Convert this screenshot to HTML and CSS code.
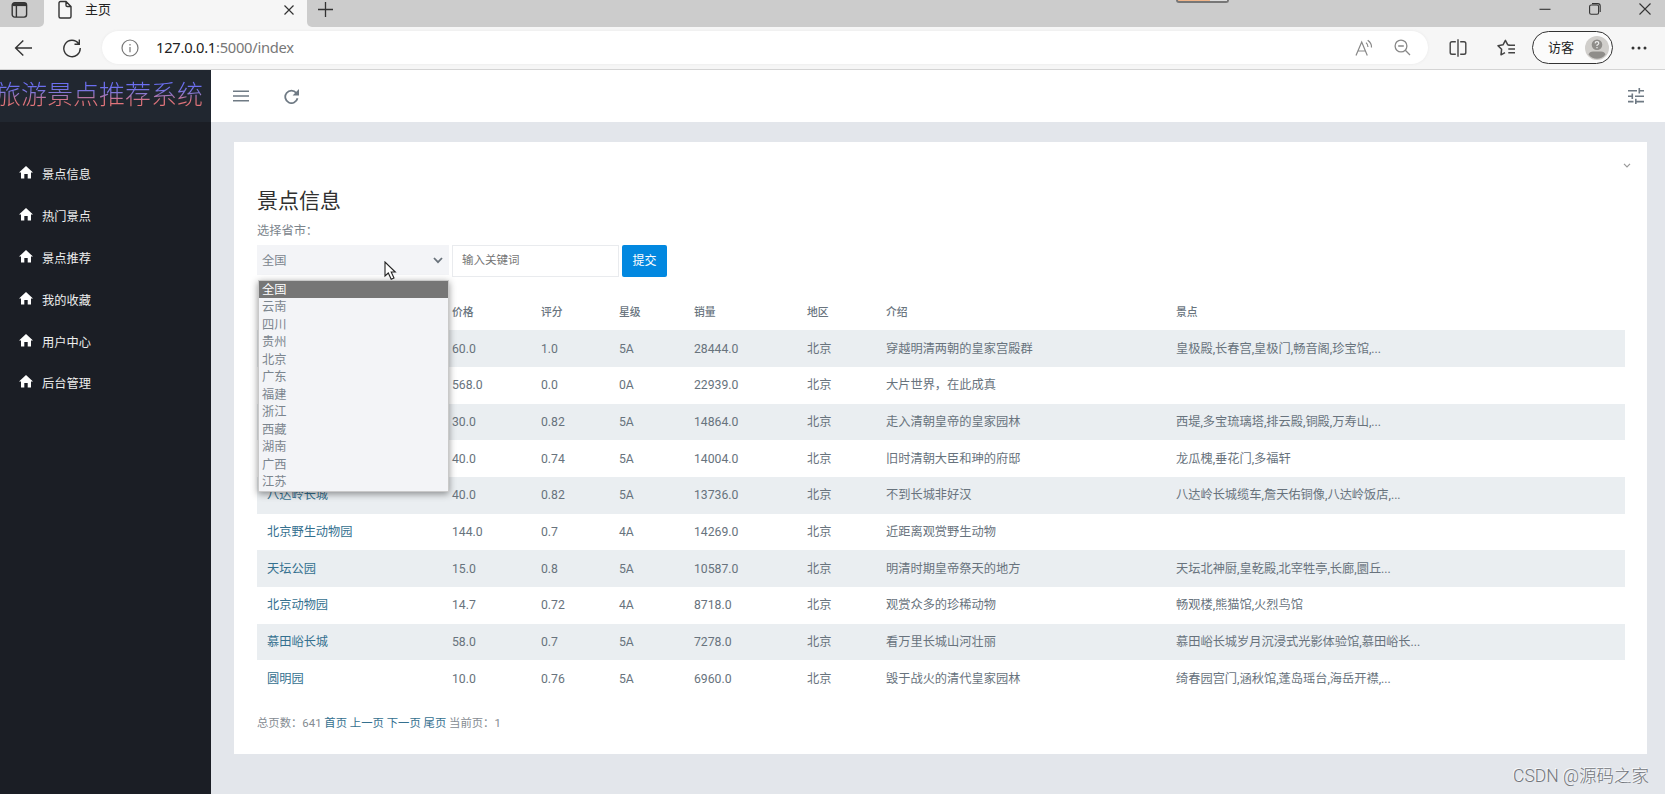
FILE: index.html
```html
<!DOCTYPE html>
<html lang="zh-CN">
<head>
<meta charset="utf-8">
<title>主页</title>
<link rel="stylesheet" href="styles.css">
</head>
<body>
<svg class="sprite" aria-hidden="true">
  <symbol id="home" viewBox="0 0 14 13"><path d="M7 0 14 6.6H12V12.5H8.7V8H5.3V12.5H2V6.6H0Z" fill="#fff"/></symbol>
</svg>
<div class="browser">
  <div class="tabstrip">
    <div class="tabstrip-left"><svg width="18" height="18" viewBox="0 0 18 18" fill="none" stroke="#333" stroke-width="1.4"><rect x="1.2" y="1.7" width="14.4" height="14.4" rx="2.5"/><path d="M1.5 4h14M5.4 5v11" /><path d="M2 3.6h13" stroke-width="3"/></svg></div>
    <div class="tab">
      <svg class="tab-file" width="16" height="20" viewBox="0 0 16 20" fill="none" stroke="#333" stroke-width="1.4"><path d="M3.5 1.5H9L14 6.5V16.5Q14 18 12.5 18H3.5Q2 18 2 16.5V3Q2 1.5 3.5 1.5ZM9 1.7V5.2Q9 6.5 10.3 6.5H13.8"/></svg>
      <span class="tab-title">主页</span>
      <svg class="tab-close" width="12" height="12" viewBox="0 0 12 12" stroke="#333" stroke-width="1.2"><path d="M1.5 1.5 10.5 10.5M10.5 1.5 1.5 10.5"/></svg>
    </div>
    <div class="tabstrip-right">
      <svg class="plus" width="17" height="17" viewBox="0 0 17 17" stroke="#333" stroke-width="1.3"><path d="M8.5 1V16M1 8.5H16"/></svg>
      <div class="recorder"></div>
      <div class="window-buttons">
        <svg width="14" height="14" viewBox="0 0 14 14" stroke="#333" stroke-width="1.1"><path d="M1.5 7.3H12.5"/></svg>
        <svg width="14" height="14" viewBox="0 0 14 14" fill="none" stroke="#333" stroke-width="1.1"><rect x="1.6" y="3" width="9" height="9.3" rx="1.6"/><path d="M4 1.6H9.8Q12.2 1.6 12.2 4V10"/></svg>
        <svg width="14" height="14" viewBox="0 0 14 14" stroke="#333" stroke-width="1.1"><path d="M1.5 1.5 12.5 12.5M12.5 1.5 1.5 12.5"/></svg>
      </div>
    </div>
  </div>
  <div class="toolbar">
    <svg class="back" width="20" height="18" viewBox="0 0 20 18" fill="none" stroke="#333" stroke-width="1.4"><path d="M18 9H1.5M9.3 1.5 1.6 9 9.3 16.5"/></svg>
    <svg class="reload" width="20" height="20" viewBox="0 0 20 20" fill="none" stroke="#333" stroke-width="1.4"><path d="M16.6 5.6A8.2 8.2 0 1 0 18.2 10M17.3 1.6V6.3H12.5"/></svg>
    <div class="address">
      <svg class="info" width="18" height="18" viewBox="0 0 18 18" fill="none" stroke="#777" stroke-width="1.2"><circle cx="9" cy="9" r="8"/><path d="M9 8V13.2M9 5V6.4"/></svg>
      <span class="url"><b>127.0.0.1</b>:5000/index</span>
      <svg class="read" width="19" height="18" viewBox="0 0 19 18" fill="none" stroke="#888" stroke-width="1.2"><path d="M1 16.5 6.7 3 12.3 16.5M3 12H10.4M11 3.6Q13 5.3 13 8M12.7 1.2Q16.8 4 16.5 8.5"/></svg>
      <svg class="zoom" width="17" height="17" viewBox="0 0 17 17" fill="none" stroke="#888" stroke-width="1.3"><circle cx="7" cy="7" r="5.9"/><path d="M4.2 7H9.8M11.3 11.3 16 16"/></svg>
    </div>
    <svg class="split" width="18" height="18" viewBox="0 0 18 18" fill="none" stroke="#444" stroke-width="1.4"><path d="M6.8 2.7H3Q1.2 2.7 1.2 4.5V13.5Q1.2 15.3 3 15.3H6.8M11.2 2.7H15Q16.8 2.7 16.8 4.5V13.5Q16.8 15.3 15 15.3H11.2M9 .2V17.8"/></svg>
    <svg class="fav" width="19" height="18" viewBox="0 0 19 18" fill="none" stroke="#444" stroke-width="1.5" stroke-linejoin="round"><path d="M13 6.2 10.8 5.8 8.4 1.3 6 5.8 1 6.7 4.6 10.3 4 15.8 8 13.7M11.3 6.3H18M11.3 10H18M11.3 13.7H18"/></svg>
    <div class="profile"><span>访客</span>
      <svg width="24" height="24" viewBox="0 0 24 24"><circle cx="12" cy="12" r="12" fill="#d0cecb"/><circle cx="12" cy="8.7" r="5.3" fill="#8f8d8a"/><path d="M3.5 18.5Q4.5 15.5 8 15.5H16Q19.5 15.5 20.5 18.5Q17 22.8 12 22.8T3.5 18.5Z" fill="#8f8d8a"/><path d="M10.1 7.4Q10.2 5.6 12 5.6T13.8 7.2Q13.8 8.2 12 9.2V10M12 11V12.2" fill="none" stroke="#eee" stroke-width="1.2"/></svg>
    </div>
    <svg class="more" width="16" height="4" viewBox="0 0 16 4" fill="#333"><circle cx="2" cy="2" r="1.5"/><circle cx="8" cy="2" r="1.5"/><circle cx="14" cy="2" r="1.5"/></svg>
  </div>
</div>
<div class="app">
  <aside class="sidebar">
    <div class="brand"><span>旅游景点推荐系统</span></div>
    <nav class="nav">
      <a><svg><use href="#home"/></svg>景点信息</a>
      <a><svg><use href="#home"/></svg>热门景点</a>
      <a><svg><use href="#home"/></svg>景点推荐</a>
      <a><svg><use href="#home"/></svg>我的收藏</a>
      <a><svg><use href="#home"/></svg>用户中心</a>
      <a><svg><use href="#home"/></svg>后台管理</a>
    </nav>
  </aside>
  <div class="content">
    <header class="topbar">
      <svg class="menu" width="16" height="12" viewBox="0 0 16 12" stroke="#6f7a84" stroke-width="1.5"><path d="M0 1.2H16M0 6H16M0 10.8H16"/></svg>
      <svg class="refresh" width="15" height="15" viewBox="0 0 15 15"><path d="M12.3 4A6.2 6.2 0 1 0 13.5 9.3" fill="none" stroke="#6f7a84" stroke-width="1.8"/><path d="M15 0V6.5H8.6Z" fill="#6f7a84"/></svg>
      <svg class="tune" width="16" height="16" viewBox="0 0 16 16" stroke="#6f7a84" stroke-width="1.6"><path d="M0 2.8H9M11.3 2.8H16M11.3 0V5.6M0 8.3H5M7 8.3H16M4.3 5.6V11M0 13.6H5.5M7.5 13.6H16M7.8 10.8V16"/></svg>
    </header>
    <main class="card">
      <svg class="collapse" width="8" height="5" viewBox="0 0 8 5" fill="none" stroke="#999" stroke-width="1.2"><path d="M1 .8 4 3.8 7 .8"/></svg>
      <h2>景点信息</h2>
      <div class="label">选择省市：</div>
      <div class="filter">
        <div class="select">全国
          <svg width="10" height="7" viewBox="0 0 10 7" fill="none" stroke="#69727b" stroke-width="1.8"><path d="M1 1 5 5.2 9 1"/></svg>
          <div class="options">
            <div class="on">全国</div><div>云南</div><div>四川</div><div>贵州</div><div>北京</div><div>广东</div><div>福建</div><div>浙江</div><div>西藏</div><div>湖南</div><div>广西</div><div>江苏</div>
          </div>
          <svg class="cursor" width="13" height="20" viewBox="0 0 13 20"><path d="M1 1V15L4.3 12 7.2 18.3 10 17 7.2 11H11.3Z" fill="#fff" stroke="#222" stroke-width="1.1"/></svg>
        </div>
        <div class="keyword">输入关键词</div>
        <button>提交</button>
      </div>
      <table>
        <colgroup><col class="c1"><col class="c2"><col class="c3"><col class="c4"><col class="c5"><col class="c6"><col class="c7"><col></colgroup>
        <thead><tr><th></th><th>价格</th><th>评分</th><th>星级</th><th>销量</th><th>地区</th><th>介绍</th><th>景点</th></tr></thead>
        <tbody>
          <tr><td></td><td>60.0</td><td>1.0</td><td>5A</td><td>28444.0</td><td>北京</td><td>穿越明清两朝的皇家宫殿群</td><td>皇极殿,长春宫,皇极门,畅音阁,珍宝馆,...</td></tr>
          <tr><td></td><td>568.0</td><td>0.0</td><td>0A</td><td>22939.0</td><td>北京</td><td>大片世界，在此成真</td><td></td></tr>
          <tr><td></td><td>30.0</td><td>0.82</td><td>5A</td><td>14864.0</td><td>北京</td><td>走入清朝皇帝的皇家园林</td><td>西堤,多宝琉璃塔,排云殿,铜殿,万寿山,...</td></tr>
          <tr><td></td><td>40.0</td><td>0.74</td><td>5A</td><td>14004.0</td><td>北京</td><td>旧时清朝大臣和珅的府邸</td><td>龙瓜槐,垂花门,多福轩</td></tr>
          <tr><td><a>八达岭长城</a></td><td>40.0</td><td>0.82</td><td>5A</td><td>13736.0</td><td>北京</td><td>不到长城非好汉</td><td>八达岭长城缆车,詹天佑铜像,八达岭饭店,...</td></tr>
          <tr><td><a>北京野生动物园</a></td><td>144.0</td><td>0.7</td><td>4A</td><td>14269.0</td><td>北京</td><td>近距离观赏野生动物</td><td></td></tr>
          <tr><td><a>天坛公园</a></td><td>15.0</td><td>0.8</td><td>5A</td><td>10587.0</td><td>北京</td><td>明清时期皇帝祭天的地方</td><td>天坛北神厨,皇乾殿,北宰牲亭,长廊,圜丘...</td></tr>
          <tr><td><a>北京动物园</a></td><td>14.7</td><td>0.72</td><td>4A</td><td>8718.0</td><td>北京</td><td>观赏众多的珍稀动物</td><td>畅观楼,熊猫馆,火烈鸟馆</td></tr>
          <tr><td><a>慕田峪长城</a></td><td>58.0</td><td>0.7</td><td>5A</td><td>7278.0</td><td>北京</td><td>看万里长城山河壮丽</td><td>慕田峪长城岁月沉浸式光影体验馆,慕田峪长...</td></tr>
          <tr><td><a>圆明园</a></td><td>10.0</td><td>0.76</td><td>5A</td><td>6960.0</td><td>北京</td><td>毁于战火的清代皇家园林</td><td>绮春园宫门,涵秋馆,蓬岛瑶台,海岳开襟,...</td></tr>
        </tbody>
      </table>
      <div class="pager">总页数：641 <a>首页</a> <a>上一页</a> <a>下一页</a> <a>尾页</a> 当前页：1</div>
    </main>
    <div class="watermark">CSDN @源码之家</div>
  </div>
</div>
</body>
</html>
```
FILE: styles.css
```css
* { box-sizing: border-box; }
body { margin: 0; width: 1665px; height: 794px; overflow: hidden; font-family: Roboto, "Noto Sans CJK SC", sans-serif; font-size: 12.22px; color: #6c757d; background: #e3e6eb; }
svg { display: block; flex: none; }
.sprite { position: absolute; width: 0; height: 0; }

.browser { height: 70px; background: #f6f6f6; border-bottom: 1px solid #d4d4d4; }
.tabstrip { display: flex; height: 27px; background: #f6f6f6; }
.tabstrip-left { width: 44px; background: #cccccc; border-radius: 0 0 5px 0; padding: 1px 0 0 11px; }
.tab { width: 263px; display: flex; align-items: flex-start; padding-left: 13px; }
.tab-title { margin-left: 12px; font-size: 13px; line-height: 20px; color: #222; width: 198px; }
.tab-close { margin-top: 4px; }
.tabstrip-right { flex: 1; display: flex; background: #cccccc; border-radius: 0 0 0 5px; padding-left: 10px; }
.plus { margin-top: 1px; }
.recorder { margin-left: 842px; width: 53px; height: 3px; border: solid #777; border-width: 0 2px 2px; border-radius: 0 0 5px 5px; background: linear-gradient(90deg, #f0b58a 65%, #ddd 65%); }
.window-buttons { flex: 1; display: flex; justify-content: flex-end; gap: 36px; padding: 2px 13px 0 0; }
.toolbar { display: flex; align-items: center; height: 41px; padding-left: 14px; }
.reload { margin-left: 28px; }
.address { display: flex; align-items: center; width: 1326px; height: 33px; margin-left: 20px; padding-left: 19px; background: #fff; border-radius: 17px; box-shadow: 0 0 3px #e8e8e8; }
.url { margin: -2px 0 0 17px; width: 1199px; font-family: "Noto Sans", sans-serif; font-size: 14.7px; letter-spacing: -.25px; line-height: 20px; color: #777; }
.url b { font-weight: 400; color: #222; }
.zoom { margin-left: 20px; }
.split { margin-left: 21px; }
.fav { margin-left: 30px; }
.profile { display: flex; align-items: center; justify-content: space-between; width: 81px; height: 33px; margin-left: 16px; padding: 0 3px 2px 15px; border: 1.5px solid #333; border-radius: 17px; font-size: 13px; color: #222; background: #fbfbfb; }
.profile svg { margin-top: 2px; }
.more { margin-left: 18px; }

.app { display: flex; height: 724px; }
.sidebar { width: 211px; background: #1b1e25; }
.brand { height: 52px; background: #212730; }
.brand span { display: block; width: 208px; margin-left: -5px; font-size: 26px; line-height: 50px; font-weight: 300; white-space: nowrap; color: transparent; background: linear-gradient(#6b6ef0 32%, #8478d6 46%, #e0737b 62%, #f07a78); background-clip: text; -webkit-background-clip: text; }
.nav { padding-top: 31px; }
.nav a { display: flex; align-items: center; height: 41.9px; padding-left: 19px; color: #eee; }
.nav svg { width: 14px; height: 13px; margin: -3px 9px 0 0; }

.content { flex: 1; display: flex; flex-direction: column; }
.topbar { display: flex; align-items: center; height: 52px; padding: 0 33px 0 22px; background: #fff; }
.refresh { margin-left: 35px; }
.tune { margin-left: auto; margin-right: -12px; }
.card { position: relative; height: 612px; margin: 20px 18px 0 23px; padding: 43px 22px 0 23px; background: #fff; }
.collapse { position: absolute; right: 16px; top: 21px; }
h2 { margin: 0; font-size: 21px; line-height: 32px; font-weight: 400; color: #303030; }
.label { margin-top: 5px; line-height: 18px; color: #7c858d; }
.filter { display: flex; margin-top: 5px; height: 32px; }
.select { position: relative; width: 192px; height: 30px; padding: 0 6px 0 5px; display: flex; align-items: center; justify-content: space-between; background: #f3f4f7; color: #7b858e; }
.options { position: absolute; z-index: 2; left: 1px; top: 35px; width: 191px; height: 212px; border: 1px solid #c9c9c9; background: #f3f4f7; box-shadow: 0 2px 7px rgba(0,0,0,.42); color: #7b858e; }
.options div { height: 17.47px; line-height: 19.4px; padding-left: 3px; }
.options .on { background: #767676; color: #fff; }
.cursor { position: absolute; z-index: 3; left: 127px; top: 16px; }
.keyword { width: 167px; margin-left: 3px; padding-left: 9px; border: 1px solid #e9ebee; font-size: 11.5px; line-height: 29px; color: #757575; }
button { width: 45px; height: 32px; margin-left: 3px; padding: 0; border: 0; border-radius: 2px; background: #0288e0; color: #fff; font: 12px/31px Roboto, "Noto Sans CJK SC", sans-serif; }
table { width: 1368px; margin-top: 16px; table-layout: fixed; border-collapse: collapse; }
.c1 { width: 185px; } .c2 { width: 89px; } .c3 { width: 78px; } .c4 { width: 75px; } .c5 { width: 113px; } .c6 { width: 79px; } .c7 { width: 290px; }
th, td { padding: 0 0 0 10px; text-align: left; white-space: nowrap; }
th { height: 37.3px; padding-bottom: 2px; font-size: 10.8px; font-weight: 500; color: #69747e; }
td { height: 36.7px; line-height: 18px; color: #68737d; }
tbody tr { height: 36.7px; }
tbody tr:nth-child(odd) { background: #eaeef1; }
a { color: #34708f; }
.pager { margin-top: 16px; font-size: 11.35px; line-height: 20px; color: #858c92; white-space: nowrap; }
.watermark { margin-top: 7px; padding-right: 16px; text-align: right; font-size: 17.5px; font-weight: 300; line-height: 30px; color: #74777c; text-shadow: -1px -1px 0 #f7f8fa; }
```
